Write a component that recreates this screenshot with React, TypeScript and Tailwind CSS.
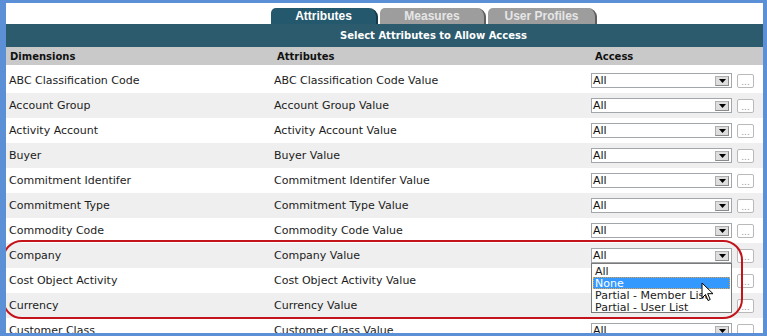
import React from 'react';

const ROWS = [
  'ABC Classification Code',
  'Account Group',
  'Activity Account',
  'Buyer',
  'Commitment Identifer',
  'Commitment Type',
  'Commodity Code',
  'Company',
  'Cost Object Activity',
  'Currency',
  'Customer Class',
];

// rows whose select sits under the open list
const COVERED = ['Cost Object Activity', 'Currency'];

const OPTIONS = ['All', 'None', 'Partial - Member List', 'Partial - User List'];

const Tab = ({ label, active, width }: { label: string; active?: boolean; width: string }) => (
  <div
    className={`${width} h-[16px] flex items-center justify-center rounded-tl-[5px] rounded-tr-[9px] border-r-2 font-['Liberation_Sans',Arial,sans-serif] text-[12px] font-bold leading-none ${
      active ? 'bg-[#24586d] border-[#17384a] text-white' : 'bg-[#9d9d9d] border-[#5e5e5e] text-[#e6e6e6]'
    }`}
  >
    {label}
  </div>
);

const Select = ({ open, hidden }: { open?: boolean; hidden?: boolean }) => (
  <div className={`relative ${hidden ? 'invisible' : ''}`}>
    <div className="w-[141px] h-[15px] border border-[#a3a7ab] bg-white flex items-center justify-between pl-[1px] pr-[2px]">
      <span className="text-[11px] leading-none text-[#111]">All</span>
      <span className="w-[14px] h-[10px] bg-[#dedede] border border-[#b0b0b0] border-r-[#8a8a8a] border-b-[#8a8a8a] flex items-center justify-center">
        <svg width="7" height="4" viewBox="0 0 7 4">
          <path d="M0 0h7L3.5 4z" fill="#000" />
        </svg>
      </span>
    </div>
    {open && (
      <div className="absolute left-0 top-full w-[141px] h-[50px] border border-[#7a7a7a] bg-white z-10 overflow-hidden pt-[1px] px-[1px]">
        {OPTIONS.map((o) => (
          <div
            key={o}
            className={`h-[12px] flex items-center whitespace-nowrap text-[11px] leading-none pl-[2px] ${
              o === 'None'
                ? 'bg-[#3399ff] text-white outline-1 outline-dotted outline-[#e8a040] -outline-offset-1'
                : 'text-[#1b1b1b]'
            }`}
          >
            {o}
          </div>
        ))}
      </div>
    )}
  </div>
);

export default function App() {
  return (
    <div className="relative w-[767px] h-[336px] overflow-hidden bg-white border-solid border-[#5b8fd6] border-l-[6px] border-t-[3px] border-r-[4px] border-b-[3px] font-['DejaVu_Sans',Verdana,sans-serif]">
      {/* tabs */}
      <div className="h-[21px] flex items-end gap-[2px] pl-[265px]">
        <Tab label="Attributes" active width="w-[107px]" />
        <Tab label="Measures" width="w-[106px]" />
        <Tab label="User Profiles" width="w-[109px]" />
      </div>

      <div className="h-[23px] bg-[#2b5b6d] flex items-center pl-[334px] text-white text-[10px] font-bold">
        Select Attributes to Allow Access
      </div>

      <div className="h-[18px] bg-[#c9c9c9] grid grid-cols-[265px_320px_1fr] items-center text-[10px] font-bold text-[#111]">
        <div className="pl-[4px]">Dimensions</div>
        <div className="pl-[6px]">Attributes</div>
        <div className="pl-[4px]">Access</div>
      </div>
      <div className="h-[3px]" />

      {ROWS.map((name, i) => (
        <div
          key={name}
          className={`h-[25px] grid grid-cols-[265px_320px_1fr] items-center text-[11px] text-[#1c1c1c] ${
            i % 2 === 1 ? 'bg-[#efefef]' : 'bg-white'
          }`}
        >
          <div className="pl-[3px] pt-[1px] whitespace-nowrap">{name}</div>
          <div className="pl-[3px] pt-[1px] whitespace-nowrap">{name} Value</div>
          <div className="flex items-center gap-[5px]">
            <Select open={name === 'Company'} hidden={COVERED.includes(name)} />
            <div className="w-[17px] h-[14px] border border-[#b9b9b9] rounded-[2px] bg-white flex items-end justify-center text-[9px] leading-[9px] text-[#9a9a9a]">
              ...
            </div>
          </div>
        </div>
      ))}

      {/* red highlight */}
      <div className="absolute left-[-4px] top-[237px] w-[741px] h-[79px] border-2 border-[#c3141c] rounded-[20px] pointer-events-none z-20" />

      {/* mouse pointer */}
      <svg className="absolute left-[695px] top-[279px] z-30" width="13" height="20" viewBox="0 0 13 20">
        <path d="M1 1v15l3.5-3.5 2.5 6 2.2-1-2.5-5.8H12z" fill="#fff" stroke="#000" strokeWidth="1" strokeLinejoin="round" />
      </svg>
    </div>
  );
}
